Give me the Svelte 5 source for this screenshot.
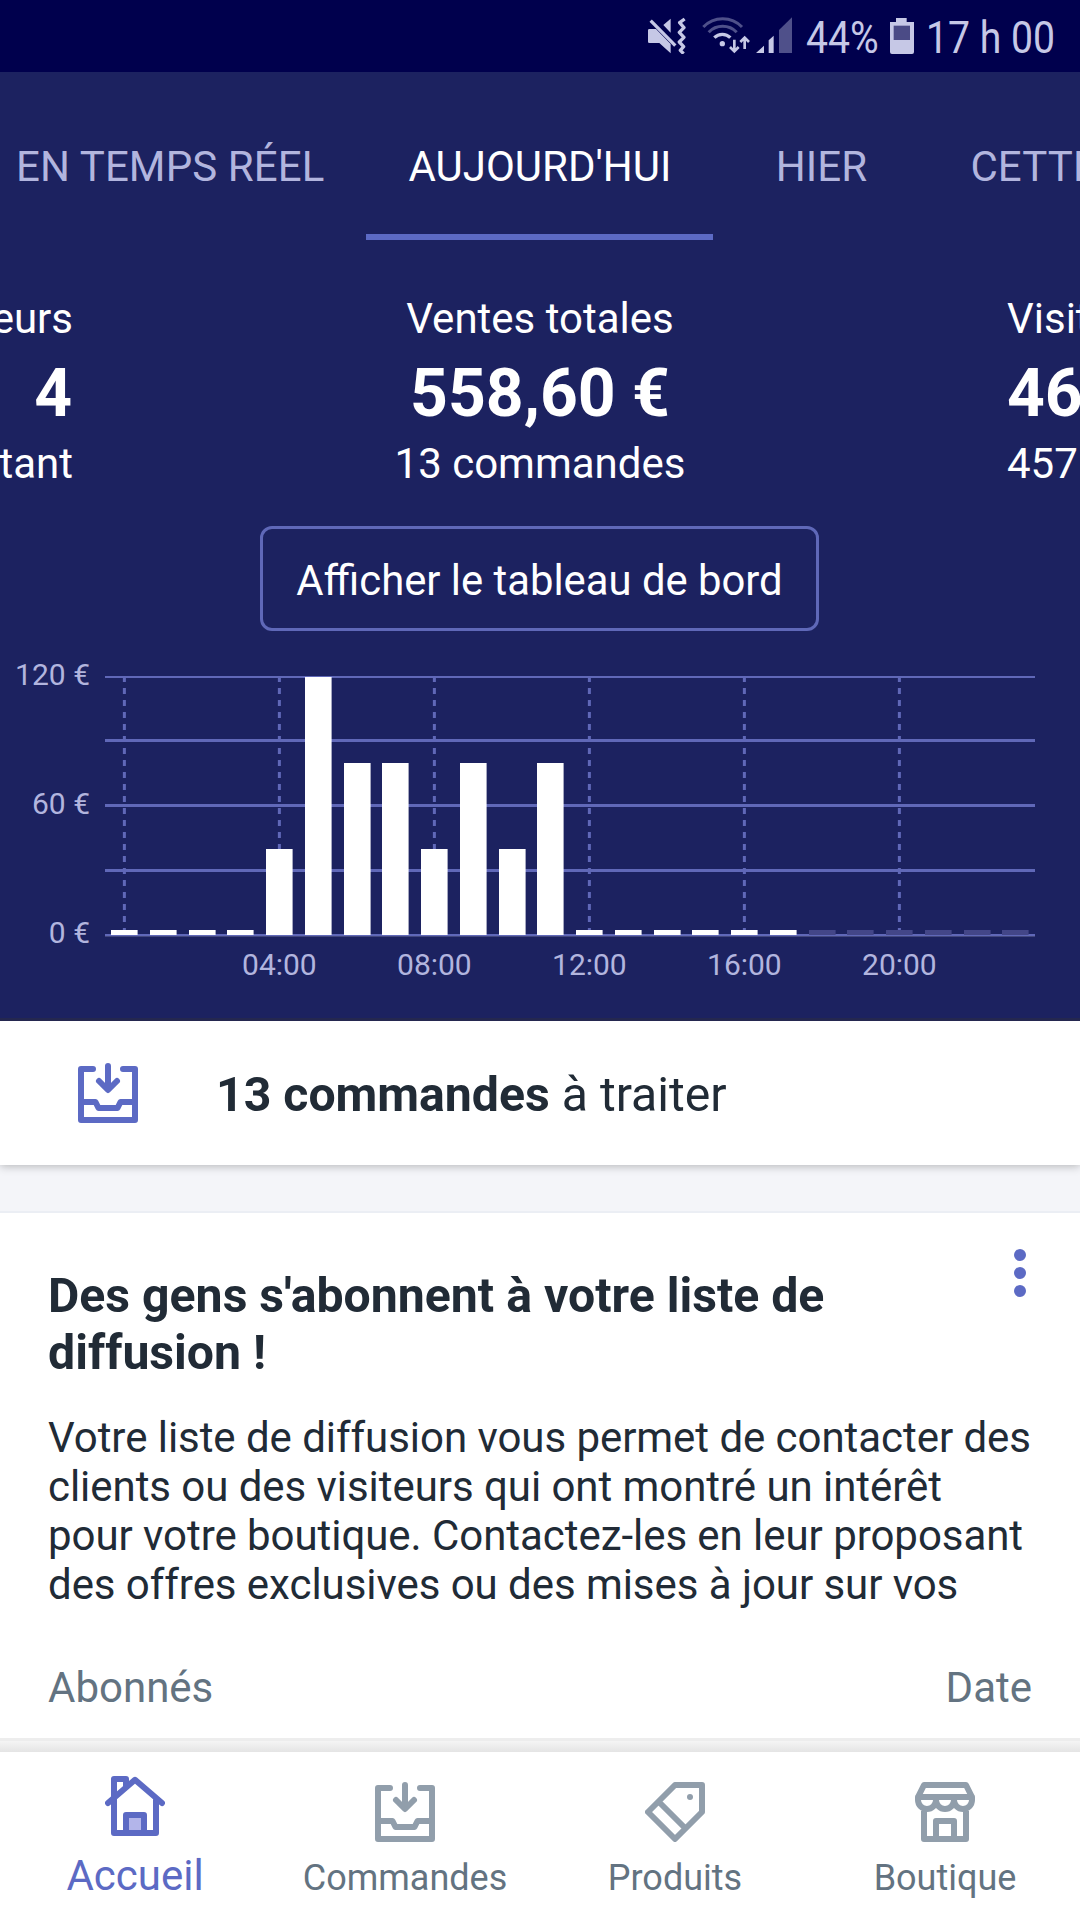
<script lang="ts">
  type IconName = "home" | "orders" | "products" | "store";

  interface NavItem {
    label: string;
    icon: IconName;
    active?: boolean;
  }

  const tabs = ["En temps réel", "Aujourd'hui", "Hier", "Cette semaine"];
  let activeTab = $state(1);

  const nav: NavItem[] = [
    { label: "Accueil", icon: "home", active: true },
    { label: "Commandes", icon: "orders" },
    { label: "Produits", icon: "products" },
    { label: "Boutique", icon: "store" },
  ];

  // sales per hour, in euros; null = hour still to come
  const sales: (number | null)[] = [
    0, 0, 0, 0, 40, 120, 80, 80, 40, 80, 40, 80,
    0, 0, 0, 0, 0, 0, null, null, null, null, null, null,
  ];

  const plot = { left: 105, right: 1035, top: 46, bottom: 304, max: 120 };
  const slot = (plot.right - plot.left) / sales.length;
  const barWidth = 26.6;

  const center = (hour: number) => plot.left + slot * (hour + 0.5);
  const yOf = (value: number) => plot.bottom - (value / plot.max) * (plot.bottom - plot.top);

  const gridTops = [108, 173, 238];
  const yLabels = [120, 60, 0];
  const hours = [0, 4, 8, 12, 16, 20];

  let bars = $derived(
    sales.map((value, hour) => {
      const height = value ? plot.bottom - yOf(value) : 5;
      return { hour, future: value === null, height, x: Math.round(center(hour) - barWidth / 2), y: plot.bottom - height };
    }),
  );
</script>

{#snippet icon(name: IconName)}
  <svg class="icon" viewBox="0 0 60 60" width="60" height="60" fill="none" stroke="currentColor" stroke-width="6" stroke-linecap="round" stroke-linejoin="round">
    {#if name === "home"}
      <rect x="21" y="39" width="18" height="18" fill="#b3b5ea" />
      <path d="M9 57V3h12v8M9 57h42V24M3 27 30 3.8 57 27" />
    {:else if name === "orders"}
      <path d="M15 6H3v51h54V6H45M30 3v23M21 18l9 9 9-9M3 39h14.500l3 6h19l3-6H57" />
    {:else if name === "products"}
      <path d="M30 3h27v27L30 57 3 30ZM13.500 19.500l27 27" />
      <circle cx="45" cy="15" r="3" fill="currentColor" stroke="none" />
    {:else}
      <path d="M9 3h42l6 12v3a9 9 0 0 1-18 0 9 9 0 0 1-18 0 9 9 0 0 1-18 0v-3ZM3 15h54M9 27v30h42V27M21 57V39h18v18" />
    {/if}
  </svg>
{/snippet}

<div class="screen">
  <div class="status">
    <svg class="mute" viewBox="84 51 118 111" width="39.300" height="37">
      <path d="M84 91q0-4 4-4h20l44 45v28l-34-31H88q-4 0-4-4ZM130 75l22-19v42Z" fill="currentColor" />
      <path d="M92 62l74 75" stroke="currentColor" stroke-width="10" />
      <path d="M194 57l-15 11 13 15-14 14 14 15-14 14 13 14-10 11 10 10" fill="none" stroke="currentColor" stroke-width="10" stroke-linejoin="round" />
    </svg>
    <svg class="wifi" viewBox="246 48 144 114" width="48" height="38" fill="none" stroke="currentColor" stroke-width="9">
      <path d="M250 81a80 80 0 0 1 116 0M266 97a58 58 0 0 1 84 0" opacity=".4" />
      <path d="M283 113a34 34 0 0 1 48 0" stroke-width="10" />
      <circle cx="307" cy="131" r="8" fill="currentColor" stroke="none" />
      <path d="M343 119v33M330 141l13 13 13-13M374 147v-33M361 126l13-13 13 13" stroke-width="8" />
    </svg>
    <svg class="signal" viewBox="408 51 108 111" width="36" height="37" fill="currentColor">
      <path d="M408 159l24-22v22ZM446 121l15-14v52h-15Z" />
      <path d="M477 90l39-38v107h-39Z" opacity=".4" />
    </svg>
    <span class="battery-level">44%</span>
    <svg class="battery" viewBox="810 54 72 108" width="24" height="36" fill="currentColor">
      <path d="M828 54h32v12h22v90q0 6-6 6h-60q-6 0-6-6V66h18Z" />
      <rect x="821" y="77" width="49" height="43" fill="#4b4b86" />
    </svg>
    <span class="clock">17 h 00</span>
  </div>

  <header>
    <nav class="tabs">
      {#each tabs as tab, i (tab)}
        <button type="button" class="tab" class:active={i === activeTab} onclick={() => (activeTab = i)}>{tab}</button>
      {/each}
    </nav>

    <div class="stats">
      <div class="stat before">
        <span class="label">Visiteurs</span>
        <strong>4</strong>
        <span class="label">Pour l'instant</span>
      </div>
      <div class="stat">
        <span class="label">Ventes totales</span>
        <strong>558,60 €</strong>
        <span class="label">13 commandes</span>
      </div>
      <div class="stat after">
        <span class="label">Visites</span>
        <strong>46</strong>
        <span class="label">457</span>
      </div>
    </div>

    <button type="button" class="dashboard">Afficher le tableau de bord</button>

    <svg class="chart" viewBox="0 0 1080 390" width="1080" height="390">
      <rect class="grid" x={plot.left} y="45" width={plot.right - plot.left} height="2" />
      {#each gridTops as y (y)}
        <rect class="grid" x={plot.left} {y} width={plot.right - plot.left} height="3" />
      {/each}
      {#each hours as hour (hour)}
        <line class="tick" x1={center(hour)} x2={center(hour)} y1="45" y2={plot.bottom} />
      {/each}
      <rect class="grid" x={plot.left} y="303" width={plot.right - plot.left} height="2" />
      <rect class="base" x={plot.left} y="305" width={plot.right - plot.left} height="1" />
      {#each bars as bar (bar.hour)}
        <rect class="bar" class:future={bar.future} x={bar.x} y={bar.y} width={barWidth} height={bar.height} />
      {/each}
      {#each yLabels as value (value)}
        <text x="90" y={yOf(value) + 8} text-anchor="end">{value} €</text>
      {/each}
      {#each hours.slice(1) as hour (hour)}
        <text x={center(hour)} y="344" text-anchor="middle">{String(hour).padStart(2, "0")}:00</text>
      {/each}
    </svg>
  </header>

  <main>
    <section class="todo">
      {@render icon("orders")}
      <p><b>13 commandes</b> à traiter</p>
    </section>

    <section class="card">
      <svg class="more" viewBox="0 0 12 48" width="12" height="48" fill="currentColor">
        <circle cx="6" cy="6" r="6" />
        <circle cx="6" cy="24" r="6" />
        <circle cx="6" cy="42" r="6" />
      </svg>
      <h2>Des gens s'abonnent à votre liste de diffusion !</h2>
      <p>
        Votre liste de diffusion vous permet de contacter des clients ou des visiteurs qui ont montré un intérêt pour
        votre boutique. Contactez-les en leur proposant des offres exclusives ou des mises à jour sur vos
      </p>
      <div class="columns">
        <span>Abonnés</span>
        <span>Date</span>
      </div>
    </section>
  </main>

  <nav class="bottom">
    {#each nav as item (item.label)}
      <a href="#{item.icon}" class:active={item.active}>
        {@render icon(item.icon)}
        <span>{item.label}</span>
      </a>
    {/each}
  </nav>
</div>

<style>
  :global(body) {
    margin: 0;
    overflow: hidden;
  }
  .screen {
    display: flex;
    flex-direction: column;
    width: 1080px;
    height: 1920px;
    overflow: hidden;
    background: #f4f5f9;
    color: #212b36;
    font-family: Roboto, sans-serif;
    font-size: 42px;
  }
  .screen * {
    box-sizing: border-box;
  }
  svg {
    display: block;
    flex: none;
  }
  button {
    font: inherit;
    background: none;
    border: 0;
    padding: 0;
  }

  .status {
    flex: none;
    display: flex;
    height: 72px;
    padding: 17px 0 0 648px;
    background: #00004d;
    color: #c6c8e6;
  }
  .wifi {
    margin: -1px 0 0 15px;
  }
  .signal {
    margin-left: 6px;
  }
  .battery {
    margin: 1px 0 0 12px;
  }
  .battery-level,
  .clock {
    flex: none;
    line-height: 42px;
    font-size: 45px;
    white-space: nowrap;
    transform: scaleX(0.87);
    transform-origin: 0 0;
  }
  .battery-level {
    width: 72px;
    margin-left: 14px;
  }
  .clock {
    margin-left: 12px;
  }

  header {
    flex: none;
    height: 949px;
    background: #1c2260;
    border-bottom: 3px solid #24274f;
    color: #fff;
  }
  .tabs {
    display: flex;
    height: 168px;
    margin-left: -26px;
  }
  .tab {
    flex: none;
    min-width: 216px;
    padding: 26px 42px 0;
    border-bottom: 6px solid transparent;
    color: #b2b5de;
    letter-spacing: 0.1px;
    text-transform: uppercase;
    white-space: nowrap;
  }
  .tab.active {
    color: #fff;
    border-color: #5c6ac4;
    letter-spacing: 0;
  }
  .tab:last-child {
    padding-left: 41px;
  }

  .stats {
    display: flex;
    justify-content: space-between;
    padding-top: 51px;
    overflow: hidden;
  }
  .stat {
    display: flex;
    flex-direction: column;
    align-items: center;
    white-space: nowrap;
  }
  .stat.before {
    width: 73px;
    align-items: flex-end;
  }
  .stat.before strong {
    padding-right: 1px;
  }
  .stat.after {
    width: 73px;
    align-items: flex-start;
  }
  .label {
    line-height: 56px;
  }
  .stat strong {
    margin: 8px 0 3px;
    font-size: 66px;
    line-height: 78px;
  }
  .dashboard {
    display: block;
    width: 559px;
    height: 105px;
    margin: 34px 0 0 260px;
    padding-top: 4px;
    border: 3px solid #5f68b8;
    border-radius: 12px;
    color: #fff;
    font-size: 41.800px;
  }

  .chart text {
    font-size: 30px;
    fill: #b2b5de;
  }
  .grid {
    fill: #6068b8;
  }
  .base {
    fill: #43487f;
  }
  .tick {
    stroke: #6068b8;
    stroke-width: 3;
    stroke-dasharray: 6;
  }
  .bar {
    fill: #fff;
  }
  .bar.future {
    fill: #434688;
  }

  main {
    flex: 1;
    min-height: 0;
    display: flex;
    flex-direction: column;
    gap: 46px;
  }
  .todo {
    display: flex;
    align-items: center;
    height: 144px;
    padding-left: 78px;
    background: #fff;
    box-shadow: 0 1px 9px rgba(0, 0, 0, 0.28);
    clip-path: inset(0 0 -20px);
    font-size: 48.200px;
  }
  .todo .icon {
    margin-top: -1px;
    color: #5c6ac4;
  }
  .todo p {
    margin: 2px 0 0 78px;
  }
  .card {
    position: relative;
    flex: 1;
    padding: 54px 48px 0;
    background: #fff;
    border-top: 2px solid #ebeef4;
  }
  .more {
    position: absolute;
    top: 36px;
    right: 54px;
    color: #5c6ac4;
  }
  h2 {
    width: 830px;
    margin: 0;
    font-size: 48.200px;
    line-height: 57px;
    font-weight: 700;
  }
  .card p {
    width: 986px;
    margin: 32px 0 0;
    line-height: 49px;
    letter-spacing: -0.05px;
  }
  .columns {
    display: flex;
    justify-content: space-between;
    margin-top: 49px;
    line-height: 60px;
    color: #637381;
  }

  .bottom {
    position: relative;
    flex: none;
    display: flex;
    height: 168px;
    background: #fff;
    color: #919eab;
  }
  .bottom::before {
    content: "";
    position: absolute;
    inset: -14px 0 100%;
    border-top: 3px solid #ededed;
    background: linear-gradient(#f5f5f5, #e4e4e4);
  }
  .bottom a {
    flex: 1;
    display: flex;
    flex-direction: column;
    align-items: center;
    padding-top: 30px;
    color: inherit;
    font-size: 36px;
    text-decoration: none;
  }
  .bottom span {
    margin-top: 15px;
    line-height: 42px;
    color: #637381;
  }
  .bottom a.active {
    padding-top: 24px;
    font-size: 42px;
    color: #5c6ac4;
  }
  .bottom a.active span {
    margin-top: 19px;
    color: inherit;
  }
</style>
